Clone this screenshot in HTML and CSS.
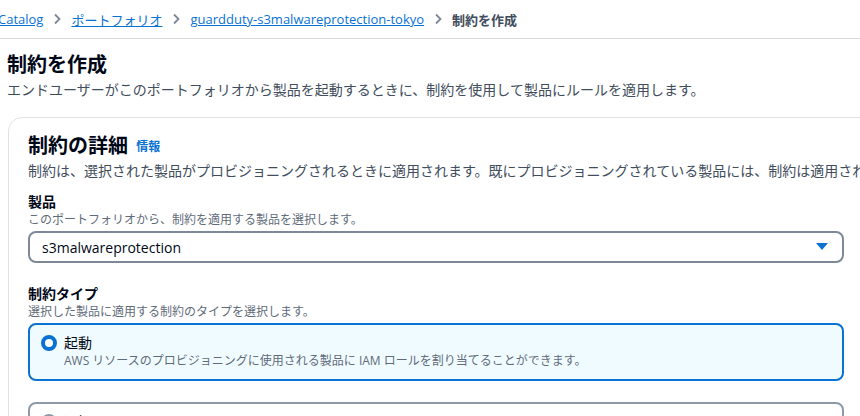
FILE: index.html
```html
<!DOCTYPE html>
<html>
<head>
    <meta charset="UTF-8">
    <title>制約を作成</title>
    <link rel="stylesheet" href="styles.css">
</head>
<body>
  <nav class="crumbs">
    <a href="#">Catalog</a>
    <svg class="sep" width="10" height="12" viewBox="0 0 10 12"><path d="M3 1.5 L7.5 6 L3 10.5" fill="none" stroke="#7d8998" stroke-width="1.8"/></svg>
    <a href="#">ポートフォリオ</a>
    <svg class="sep" width="10" height="12" viewBox="0 0 10 12"><path d="M3 1.5 L7.5 6 L3 10.5" fill="none" stroke="#7d8998" stroke-width="1.8"/></svg>
    <a href="#">guardduty-s3malwareprotection-tokyo</a>
    <svg class="sep" width="10" height="12" viewBox="0 0 10 12"><path d="M3 1.5 L7.5 6 L3 10.5" fill="none" stroke="#7d8998" stroke-width="1.8"/></svg>
    <span class="current">制約を作成</span>
  </nav>

  <main class="page">
    <h1>制約を作成</h1>
    <p class="lead">エンドユーザーがこのポートフォリオから製品を起動するときに、制約を使用して製品にルールを適用します。</p>

    <section class="card">
      <h2>制約の詳細 <a class="info" href="#">情報</a></h2>
      <p class="card-desc">制約は、選択された製品がプロビジョニングされるときに適用されます。既にプロビジョニングされている製品には、制約は適用されません。</p>

      <div class="field">
        <div class="label">製品</div>
        <div class="hint">このポートフォリオから、制約を適用する製品を選択します。</div>
        <div class="select">
          <span>s3malwareprotection</span>
          <svg width="12" height="8" viewBox="0 0 12 8"><path d="M0 0 H12 L6 7 Z" fill="#0972d3"/></svg>
        </div>
      </div>

      <div class="field">
        <div class="label">制約タイプ</div>
        <div class="hint">選択した製品に適用する制約のタイプを選択します。</div>
        <div class="tile selected">
          <span class="radio on"></span>
          <div>
            <div class="tile-title">起動</div>
            <div class="tile-desc">AWS リソースのプロビジョニングに使用される製品に IAM ロールを割り当てることができます。</div>
          </div>
        </div>
        <div class="tile">
          <span class="radio"></span>
          <div>
            <div class="tile-title">通知</div>
          </div>
        </div>
      </div>
    </section>
  </main>
</body>
</html>
```

FILE: styles.css
```css
html, body {
  margin: 0;
  padding: 0;
  overflow: hidden;
}
body {
  font-family: "Open Sans", "Noto Sans CJK JP", sans-serif;
  color: #000716;
  background: #ffffff;
  width: 860px;
  height: 416px;
}
a {
  color: #0972d3;
}

.crumbs {
  display: flex;
  align-items: center;
  height: 38px;
  border-bottom: 1px solid #d5d8dc;
  font-size: 13px;
  margin-left: -2px;
  white-space: nowrap;
}
.crumbs a {
  text-decoration: underline;
}
.sep {
  margin: 0 9px;
}
.current {
  color: #414d5c;
  font-weight: 700;
}

.page {
  padding-left: 7px;
}
h1 {
  margin: 12px 0 0;
  font-size: 20px;
  line-height: 28px;
  font-weight: 700;
}
.lead {
  margin: 0;
  font-size: 14px;
  line-height: 22px;
  color: #414d5c;
  white-space: nowrap;
}

.card {
  margin: 16px 0 0 1px;
  width: 900px;
  border: 1px solid #dfe2e5;
  border-radius: 14px;
  padding: 14px 19px 0;
  height: 400px;
}
h2 {
  margin: 0;
  font-size: 20px;
  line-height: 28px;
  font-weight: 700;
}
.info {
  font-size: 12px;
  font-weight: 700;
  text-decoration: none;
  margin-left: 3px;
  vertical-align: 2px;
}
.card-desc {
  margin: 0;
  font-size: 14px;
  line-height: 20px;
  color: #414d5c;
  white-space: nowrap;
}

.field {
  margin-top: 11px;
  width: 816px;
}
.field + .field {
  margin-top: 21px;
}
.label {
  font-size: 14px;
  font-weight: 700;
  line-height: 20px;
}
.hint {
  font-size: 12px;
  line-height: 16px;
  color: #5f6b7a;
}
.select {
  margin-top: 3px;
  height: 28px;
  border: 2px solid #7d8998;
  border-radius: 8px;
  display: flex;
  align-items: center;
  justify-content: space-between;
  padding: 0 14px 0 12px;
  font-size: 14px;
}

.tile {
  margin-top: 3px;
  border: 2px solid #8d99a8;
  border-radius: 8px;
  display: flex;
  gap: 7px;
  padding: 8px 11px;
  height: 38px;
}
.tile + .tile {
  margin-top: 21px;
}
.tile.selected {
  border-color: #0972d3;
  background: #f0fbff;
}
.radio {
  flex: none;
  margin-top: 2px;
  width: 16px;
  height: 16px;
  box-sizing: border-box;
  border-radius: 50%;
  border: 2px solid #8d99a8;
  background: #fff;
}
.radio.on {
  border: 4px solid #0972d3;
}
.tile-title {
  font-size: 14px;
  line-height: 20px;
}
.tile-desc {
  font-size: 12px;
  line-height: 16px;
  color: #5f6b7a;
  white-space: nowrap;
}
```
